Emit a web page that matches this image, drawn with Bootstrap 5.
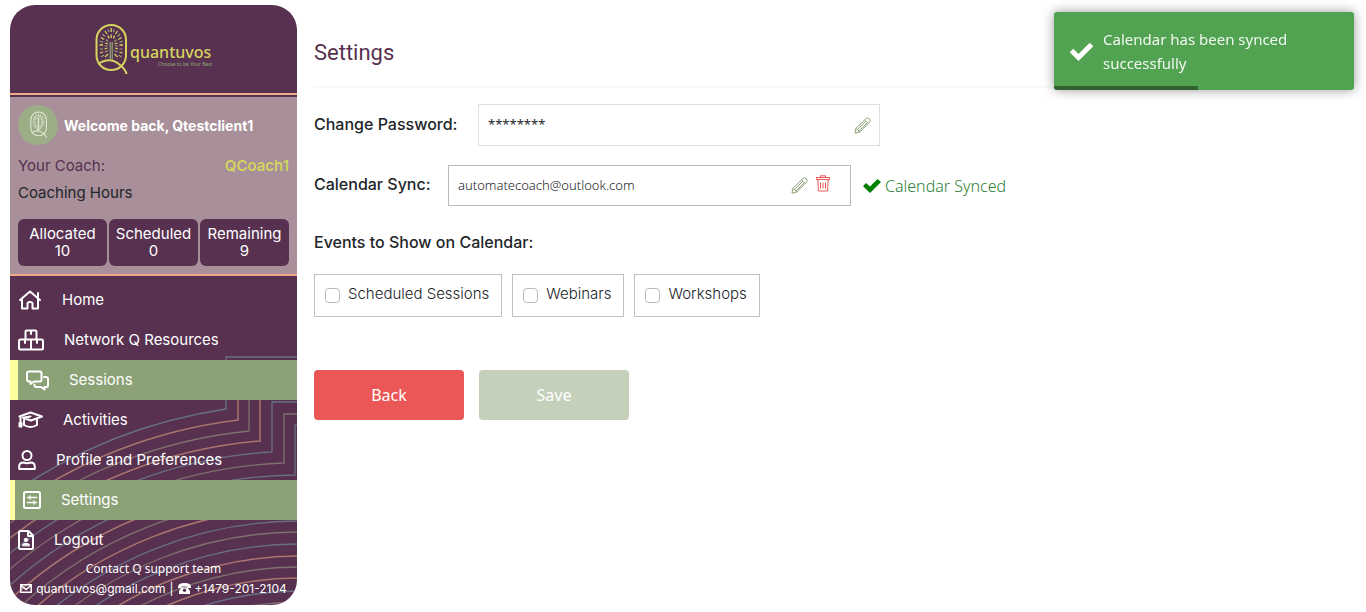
<!DOCTYPE html>
<html lang="en">
<head>
<meta charset="utf-8">
<meta name="viewport" content="width=device-width, initial-scale=1">
<title>Settings</title>
<link href="https://cdn.jsdelivr.net/npm/bootstrap@5.3.0/dist/css/bootstrap.min.css" rel="stylesheet">
<style>
:root { --plum:#57314f; --sage:#8ba277; --peach:#f0a986; --lime:#d2d55c; }
body { font-family: Inter, "Open Sans", sans-serif; font-size:16px; color:#212529; }
.sidebar { width:21%; min-width:287px; min-height:600px; margin:5px 0 7px 10px; background:var(--plum); border-radius:25px; color:#fff; }
.sidebar > * { position:relative; }
.sidebar .contours { position:absolute; right:0; bottom:0; }
.brand-area { height:88px; }
.client-panel { border-top:2px solid var(--peach); border-bottom:2px solid var(--peach); padding-top:2px; }
.client-body { background:#a88f99; padding:8px; }
.avatar-dot { width:40px; height:40px; background:#9bae85; }
.welcome-row { gap:6px; margin-bottom:7px; }
.welcome { font-size:14px; font-weight:700; }
.side-text { font-size:15px; line-height:27px; }
.coach-name { color:var(--lime); font-size:15px; font-weight:600; text-decoration:none; }
.hours-grid { gap:2px; margin-top:13px; }
.hours-box { flex:1 1 0; background:var(--plum); border-radius:6px; font-size:15px; line-height:17px; padding:6px 0 7px; text-align:center; }
.side-nav { padding-top:4px; }
.side-link { display:flex; align-items:center; gap:20px; height:40px; padding-left:8px; color:#fff; text-decoration:none; font-size:15px; }
.side-link svg { flex:none; fill:none; stroke:#fff; stroke-width:2; stroke-linejoin:round; stroke-linecap:round; }
.side-link.on { background:var(--sage); border-left:5px solid #ffffa1; }
.side-link.on.wide { border-left-width:8px; }
.contact { font-size:12px; line-height:21px; padding-bottom:4px; }
.contact-title { font-family:"Noto Sans", sans-serif; line-height:18px; }
.contact a { color:#fff; text-decoration:none; }
main { padding:0 16px 0 17px; min-width:0; }
.page-title { font-family:Roboto, sans-serif; font-size:22px; font-weight:400; line-height:32px; color:var(--plum); margin:37px 0 17px; }
.title-rule { border-bottom:2px solid #f8f8f8; margin-bottom:16px; }
.form-name { font-weight:500; font-size:16px; line-height:24px; }
.pw-name { min-width:148px; }
.cal-name { min-width:118px; }
.form-line label { padding-bottom:3px; }
.cal-line { margin-top:19px; }
.entry { width:402px; height:42px; border:1px solid #dedfe6; padding:0 8px 0 9px; }
.entry.strong { width:403px; height:41px; border-color:#bbb; padding-right:20px; }
.entry input { border:0; outline:0; padding:0; flex:1; min-width:0; background:none; font-family:"Noto Sans", sans-serif; font-size:13px; color:#212529; }
.entry.strong input { font-weight:300; }
.entry button { border:0; background:none; padding:0; display:flex; }
.synced { color:#2e8036; font-family:"Noto Sans", sans-serif; font-weight:300; }
.events-name { margin:24px 0 20px; }
.event-list { gap:10px; }
.event-option { border:1px solid #bcc3c3; height:43px; padding:0 12px 0 10px; gap:8px; font-size:15px; font-weight:300; }
.event-option .form-check-input { margin:0; border-color:#bbb; }
.event-option span { padding-bottom:2px; }
.action-row { gap:15px; margin-top:53px; }
.action { width:150px; height:50px; border:0; border-radius:4px; color:#fff; font-family:"Noto Sans", sans-serif; font-size:16px; }
.action.back { background:#eb5757; }
.action.save { background:#c5d0bb; }
.notice { position:fixed; right:12px; top:12px; width:300px; background:#51a351; color:#f1f8f1; border-radius:3px; box-shadow:0 0 12px #999; padding:15px; font-family:"Noto Sans", sans-serif; font-size:15px; line-height:24px; overflow:hidden; }
.notice-bar { position:absolute; left:0; bottom:0; height:4px; background:#000; opacity:.4; }
</style>
</head>
<body>
<div class="d-flex align-items-start">
<aside class="sidebar flex-shrink-0 overflow-hidden position-relative">
  <svg class="contours" width="287" height="260" fill="none" stroke-width="1.300" aria-hidden="true">
    <g stroke="#697085">
      <path d="M300 12H216V64A509 509 0 0 0 0 150"/><path d="M300 57H262V107A462 462 0 0 0 0 208"/><path d="M300 80H285V130A438 438 0 0 0 0 240"/>
      <circle cx="290" cy="568" r="392"/><circle cx="290" cy="568" r="369"/><circle cx="290" cy="568" r="322"/>
    </g>
    <g stroke="#a9766f" stroke-width="1.500">
      <path d="M300 24H228V75A497 497 0 0 0 0 164"/><path d="M300 46H250V96A474 474 0 0 0 0 193"/>
      <circle cx="290" cy="568" r="427"/><circle cx="290" cy="568" r="404"/><circle cx="290" cy="568" r="357"/><circle cx="290" cy="568" r="335"/>
    </g>
    <g stroke="#80706f">
      <path d="M300 35H239V86A486 486 0 0 0 0 178"/><path d="M300 69H274V118A450 450 0 0 0 0 224"/>
      <circle cx="290" cy="568" r="415"/><circle cx="290" cy="568" r="381"/><circle cx="290" cy="568" r="346"/><circle cx="290" cy="568" r="311"/>
    </g>
  </svg>
  <div class="brand-area d-flex align-items-center justify-content-center">
    <svg width="117" height="54" viewBox="0 0 117 54" role="img" aria-label="quantuvos">
      <defs>
        <g id="tree">
          <rect x="1.500" y="3" width="29.500" height="45" rx="14.700" stroke-width="2" fill="none"/>
          <path d="M3 42Q15 34 25 43Q31 48 31.500 52" stroke-width="2" fill="none"/>
        </g>
      </defs>
      <use href="#tree" stroke="#d6d45f"/>
      <path d="M15.200 20V38M17.200 20V38" stroke="#8ea878" stroke-width="1.200"/>
      <g stroke="#8ea878" stroke-width="1.200">
        <path d="M13.200 7.500L14 10M19.200 7.500L18.500 10M7.500 12L10 14.500M25 12L22.500 14.500M5 19L8 20.500M27.500 19L24.500 20.500M5 27H8M27.500 27H24.500M6 35L9 33M26.500 35L23.500 33M11 17.500L13 19.500M21.500 17.500L19.500 19.500M9.500 24H12.500M23 24H20M10 30L13 28.500M22.500 30L19.500 28.500"/>
      </g>
      <g stroke="#d6d45f" stroke-width="1.300">
        <path d="M16.200 6V10M10 9L12 12M22.500 9L20.500 12M6 15.500L9 17.500M26.500 15.500L23.500 17.500M4.500 23H8M28 23H24.500M5 31L8 30M27.500 31L24.500 30M16.200 12.500V16M13 13.500L14 16.500M19.500 13.500L18.500 16.500M10 21L13 22M22.500 21L19.500 22M9.500 27L12.500 26M23 27L20 26M10 35L13 32M22.500 35L19.500 32"/>
      </g>
      <text x="35" y="36" font-family="Noto Sans, sans-serif" font-size="16" font-weight="500" fill="#d6d45f">quantuvos</text>
      <text x="63" y="44" font-family="Noto Sans, sans-serif" font-size="5" fill="#8ea878">Choose to be Your Best</text>
    </svg>
  </div>
  <section class="client-panel">
    <div class="client-body">
      <div class="welcome-row d-flex align-items-center">
        <div class="avatar-dot rounded-circle d-flex align-items-center justify-content-center">
          <svg width="19" height="28" viewBox="-1 1 34 53" stroke="#e4eadb" fill="none" aria-hidden="true">
            <use href="#tree"/><path d="M16 14V40" stroke-width="2.500"/>
            <ellipse cx="16" cy="21.500" rx="8" ry="12" stroke-dasharray="1.500 2" stroke-width="6"/>
          </svg>
        </div>
        <div class="welcome">Welcome back, Qtestclient1</div>
      </div>
      <div class="side-text d-flex justify-content-between"><span style="color:var(--plum)">Your Coach:</span><a class="coach-name" href="#">QCoach1</a></div>
      <div class="side-text text-dark">Coaching Hours</div>
      <div class="hours-grid d-flex">
        <div class="hours-box">Allocated<br>10</div>
        <div class="hours-box">Scheduled<br>0</div>
        <div class="hours-box">Remaining<br>9</div>
      </div>
    </div>
  </section>
  <nav class="side-nav">
    <a class="side-link" href="#"><svg width="24" height="20" viewBox="0 0 24 20"><path d="M2 10L12 1.500L22 10M4 9V18.500H9.500V13.500Q9.500 12 12 12T14.500 13.500V18.500H20V9M20 7V3"/></svg>Home</a>
    <a class="side-link" href="#"><svg width="26" height="22" viewBox="0 0 26 22"><path d="M7.500 10V2.500Q7.500 1.500 8.500 1.500H17.500Q18.500 1.500 18.500 2.500V10M2.500 10.500H23.500Q25 10.500 25 12V19Q25 20.500 23.500 20.500H2.500Q1 20.500 1 19V12Q1 10.500 2.500 10.500ZM13 10.500V20.500"/><path d="M13 2V5M7 11V14M19 11V14"/></svg>Network Q Resources</a>
    <a class="side-link on wide" href="#"><svg width="23" height="21" viewBox="0 0 23 21"><path d="M3 1.500H14Q15.500 1.500 15.500 3V9.500Q15.500 11.500 14 11.500H8L4.500 14V11.500H3Q1 11.500 1 9.500V3Q1 1.500 3 1.500Z"/><path d="M18 7H20Q22 7 22 9V15.500Q22 17 20.500 17H18.500V19.500L15 17H10.500Q8.500 17 8.500 15.500V14.500"/></svg>Sessions</a>
    <a class="side-link" href="#"><svg width="25" height="18" viewBox="0 0 25 18"><path d="M1.500 5.500L12.500 1.500L24 5.500L13 9.500L5 6.800L12.500 5.500M2.500 6V15M6 9V14Q12.500 18 19 14V9M1.500 12V15.500H3.500V12"/></svg>Activities</a>
    <a class="side-link" href="#"><svg width="18" height="20" viewBox="0 0 18 20"><circle cx="9" cy="5.500" r="4.500"/><path d="M1.200 19V16.500Q1.200 12.500 5.500 12.500Q9 14 12.500 12.500Q16.800 12.500 16.800 16.500V19Z"/></svg>Profile and Preferences</a>
    <a class="side-link on" href="#"><svg width="18" height="18" viewBox="0 0 18 18"><rect x="1" y="1" width="16" height="16" rx="1.500"/><path d="M4.500 6.500H13.500M4.500 11.500H13.500M7 5V8M11 10V13" stroke-width="1.500"/></svg>Settings</a>
    <a class="side-link" href="#"><svg width="16" height="20" viewBox="0 0 16 20"><path d="M2.500 1H10.500L15 5.500V17.500Q15 19 13.500 19H2.500Q1 19 1 17.500V2.500Q1 1 2.500 1ZM10 1.500V6H14.500"/><circle cx="8" cy="10" r="1.800" fill="#fff" stroke-width="1"/><path d="M4.500 15.500Q4.500 13.500 6.500 13.500H9.500Q11.500 13.500 11.500 15.500Z" fill="#fff" stroke-width="1"/></svg>Logout</a>
  </nav>
  <footer class="contact text-center">
    <div class="contact-title">Contact Q support team</div>
    <div class="d-flex justify-content-center align-items-center gap-1">
      <svg width="12" height="9" viewBox="0 0 12 9" aria-hidden="true"><path d="M.8.800H11.200V8.200H.8ZM1 1.500L6 5.500L11 1.500" fill="none" stroke="#fff" stroke-width="1.500"/></svg>
      <a href="mailto:quantuvos@gmail.com">quantuvos@gmail.com</a><span>|</span>
      <svg width="13" height="11" viewBox="0 0 13 11" aria-hidden="true"><path d="M0 4Q0 0 6.500 0T13 4V5H9.500V3.500H3.500V5H0ZM3.500 4.500H9.500L12 8V11H1V8Z" fill="#fff"/><circle cx="6.500" cy="7.300" r="1.700" fill="#57314f"/></svg>
      <a href="tel:+14792012104">+1479-201-2104</a>
    </div>
  </footer>
</aside>
<main class="flex-grow-1">
  <h1 class="page-title">Settings</h1>
  <div class="title-rule"></div>
  <form>
    <div class="form-line d-flex align-items-center gap-3">
      <label class="form-name pw-name" for="pw">Change Password:</label>
      <div class="entry d-flex align-items-center">
        <input id="pw" type="text" value="********" readonly>
        <button type="button" aria-label="Edit password"><svg width="17" height="17" viewBox="0 0 17 17" fill="none" stroke="#8ba277"><g id="pencil"><path d="M1 16L1.800 11.500L11.800 1.700Q13.500 0 15.300 1.800T15.400 5.300L5.500 15.200ZM10.600 3L14.100 6.500M3.500 12.500L11.500 4.500M5 14L13 6M1.800 11.500L3.500 12.500L5 14L5.500 15.200"/></g></svg></button>
      </div>
    </div>
    <div class="form-line cal-line d-flex align-items-center">
      <label class="form-name cal-name me-3" for="cal">Calendar Sync:</label>
      <div class="entry strong d-flex align-items-center">
        <input id="cal" type="text" value="automatecoach@outlook.com" readonly>
        <button type="button" aria-label="Edit calendar"><svg width="17" height="17" viewBox="0 0 17 17" fill="none" stroke="#8ba277"><use href="#pencil"/></svg></button>
        <button type="button" class="ms-2 pb-1" aria-label="Remove calendar"><svg width="14" height="17" viewBox="0 0 14 17" fill="none" stroke="#eb5757"><path d="M.5 2.500H13.500V4.500H.5ZM4.500 2.500V.8H9.500V2.500M1.800 5L2.500 16H11.500L12.200 5M4.500 7.500V13.500M7 7.500V13.500M9.500 7.500V13.500"/></svg></button>
      </div>
      <div class="synced d-flex align-items-center gap-1 ms-2 ps-1"><svg width="18" height="14" viewBox="0 0 18 14" aria-hidden="true"><path d="M0 7L3 4L7 7.500L14.500 0L18 3L7 14Z" fill="#008000"/></svg>Calendar Synced</div>
    </div>
    <fieldset>
      <legend class="form-name events-name">Events to Show on Calendar:</legend>
      <div class="d-flex flex-wrap event-list">
        <label class="event-option d-flex align-items-center"><input class="form-check-input" type="checkbox"><span>Scheduled Sessions</span></label>
        <label class="event-option d-flex align-items-center"><input class="form-check-input" type="checkbox"><span>Webinars</span></label>
        <label class="event-option d-flex align-items-center"><input class="form-check-input" type="checkbox"><span>Workshops</span></label>
      </div>
    </fieldset>
    <div class="d-flex action-row">
      <button type="button" class="action back">Back</button>
      <button type="button" class="action save">Save</button>
    </div>
  </form>
</main>
</div>
<div class="notice d-flex align-items-center" role="alert">
  <svg class="flex-shrink-0 me-2" width="26" height="20" viewBox="0 0 26 20" aria-hidden="true"><path d="M2.500 9.500L9.500 16.500L22.500 3.500" fill="none" stroke="#fff" stroke-width="5"/></svg>
  <div>Calendar has been synced successfully</div>
  <div class="notice-bar" style="width:48%"></div>
</div>
<script src="https://cdn.jsdelivr.net/npm/bootstrap@5.3.0/dist/js/bootstrap.bundle.min.js"></script>
</body>
</html>
